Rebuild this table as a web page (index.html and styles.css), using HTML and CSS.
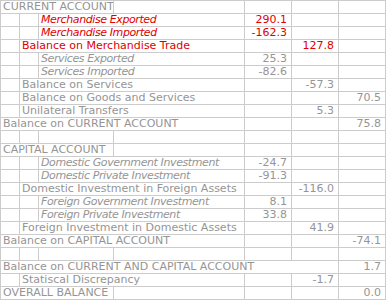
FILE: index.html
```html
<!DOCTYPE html>
<html>

<head>
    <meta charset="UTF-8">
    <title>Balance of Payments</title>
    <link rel="stylesheet" href="styles.css">
</head>

<body>
    <table class="bop">
        <colgroup>
            <col class="c-ind">
            <col class="c-ind">
            <col class="c-head">
            <col class="c-rest">
            <col class="c-num">
            <col class="c-num">
            <col class="c-num">
        </colgroup>
        <tr>
            <td colspan="3">CURRENT ACCOUNT</td>
            <td></td><td></td><td></td><td></td>
        </tr>
        <tr class="red">
            <td></td><td></td>
            <td colspan="2" class="item">Merchandise Exported</td>
            <td class="num">290.1</td><td></td><td></td>
        </tr>
        <tr class="red">
            <td></td><td></td>
            <td colspan="2" class="item">Merchandise Imported</td>
            <td class="num">-162.3</td><td></td><td></td>
        </tr>
        <tr class="red">
            <td></td>
            <td colspan="3">Balance on Merchandise Trade</td>
            <td></td><td class="num">127.8</td><td></td>
        </tr>
        <tr>
            <td></td><td></td>
            <td colspan="2" class="item">Services Exported</td>
            <td class="num">25.3</td><td></td><td></td>
        </tr>
        <tr>
            <td></td><td></td>
            <td colspan="2" class="item">Services Imported</td>
            <td class="num">-82.6</td><td></td><td></td>
        </tr>
        <tr>
            <td></td>
            <td colspan="3">Balance on Services</td>
            <td></td><td class="num">-57.3</td><td></td>
        </tr>
        <tr>
            <td></td>
            <td colspan="3">Balance on Goods and Services</td>
            <td></td><td></td><td class="num">70.5</td>
        </tr>
        <tr>
            <td></td>
            <td colspan="3">Unilateral Transfers</td>
            <td></td><td class="num">5.3</td><td></td>
        </tr>
        <tr>
            <td colspan="4">Balance on CURRENT ACCOUNT</td>
            <td></td><td></td><td class="num">75.8</td>
        </tr>
        <tr>
            <td></td><td></td><td></td><td></td><td></td><td></td><td></td>
        </tr>
        <tr>
            <td colspan="3">CAPITAL ACCOUNT</td>
            <td></td><td></td><td></td><td></td>
        </tr>
        <tr>
            <td></td><td></td>
            <td colspan="2" class="item">Domestic Government Investment</td>
            <td class="num">-24.7</td><td></td><td></td>
        </tr>
        <tr>
            <td></td><td></td>
            <td colspan="2" class="item">Domestic Private Investment</td>
            <td class="num">-91.3</td><td></td><td></td>
        </tr>
        <tr>
            <td></td>
            <td colspan="3">Domestic Investment in Foreign Assets</td>
            <td></td><td class="num">-116.0</td><td></td>
        </tr>
        <tr>
            <td></td><td></td>
            <td colspan="2" class="item">Foreign Government Investment</td>
            <td class="num">8.1</td><td></td><td></td>
        </tr>
        <tr>
            <td></td><td></td>
            <td colspan="2" class="item">Foreign Private Investment</td>
            <td class="num">33.8</td><td></td><td></td>
        </tr>
        <tr>
            <td></td>
            <td colspan="3">Foreign Investment in Domestic Assets</td>
            <td></td><td class="num">41.9</td><td></td>
        </tr>
        <tr>
            <td colspan="4">Balance on CAPITAL ACCOUNT</td>
            <td></td><td></td><td class="num">-74.1</td>
        </tr>
        <tr>
            <td></td><td></td><td></td><td></td><td></td><td></td><td></td>
        </tr>
        <tr>
            <td colspan="6">Balance on CURRENT AND CAPITAL ACCOUNT</td>
            <td class="num">1.7</td>
        </tr>
        <tr>
            <td></td>
            <td colspan="3">Statiscal Discrepancy</td>
            <td></td><td class="num">-1.7</td><td></td>
        </tr>
        <tr>
            <td colspan="3">OVERALL BALANCE</td>
            <td></td><td></td><td></td><td class="num">0.0</td>
        </tr>
    </table>
</body>

</html>
```

FILE: styles.css
```css
body {
    margin: 0;
    background-color: #FFFFFF;
}

.bop {
    border-collapse: collapse;
    table-layout: fixed;
    width: 386px;
    font-family: "DejaVu Sans", Verdana, sans-serif;
    font-size: 11px;
    color: #959595;
}

.c-ind {
    width: 19px;
}

.c-head {
    width: 75px;
}

.c-rest {
    width: 131px;
}

.c-num {
    width: 47px;
}

.bop td {
    border: 1px solid #CCCCCC;
    height: 12px;
    line-height: 12px;
    padding: 0 2px;
    white-space: nowrap;
    overflow: hidden;
}

.bop .item {
    font-style: italic;
    letter-spacing: -0.4px;
}

.bop .num {
    text-align: right;
    padding-right: 4px;
}

.bop .red td {
    color: #E00000;
}
```
